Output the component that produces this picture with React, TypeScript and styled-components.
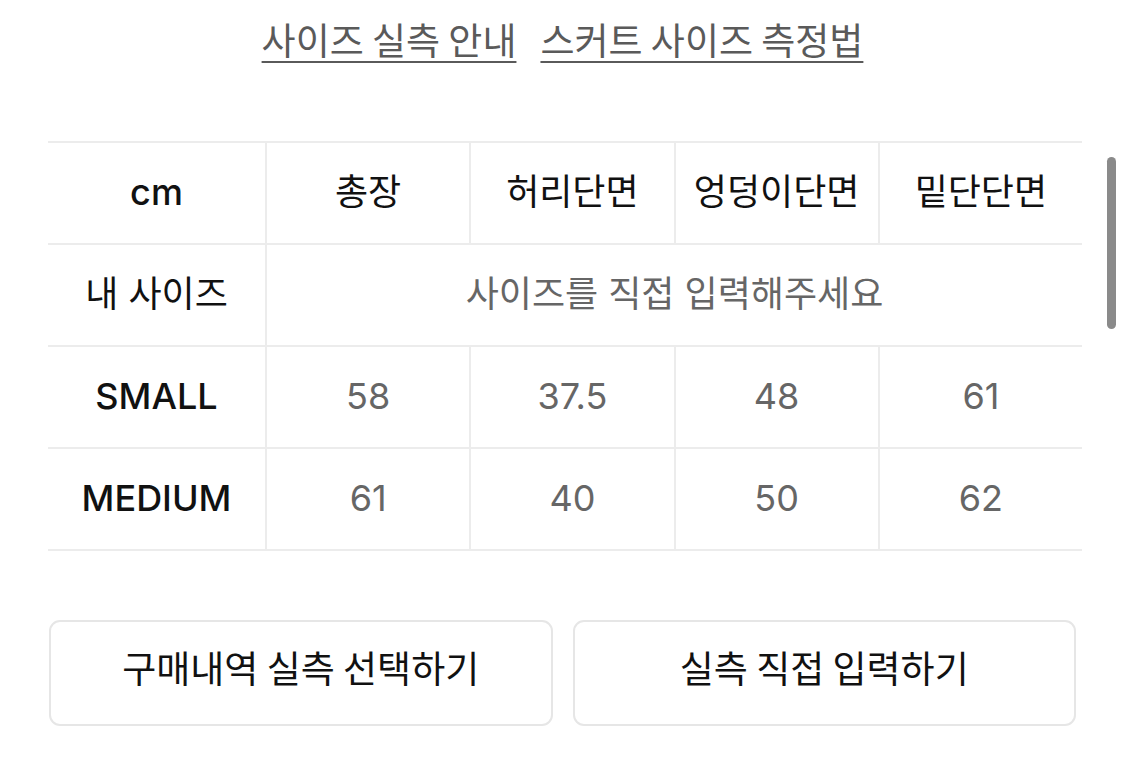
import React from "react";
import styled, { createGlobalStyle } from "styled-components";

const Global = createGlobalStyle`
  html, body { margin: 0; padding: 0; background: #fff; }
  body { font-family: Inter, "Noto Sans CJK KR", sans-serif; }
`;

const Page = styled.div`
  position: relative;
  width: 1125px;
  height: 769px;
  overflow: hidden;
  background: #fff;
`;

const LinkRow = styled.div`
  display: flex;
  justify-content: center;
  gap: 24px;
  padding-top: 13px;
  height: 141px;
  box-sizing: border-box;
`;

const GuideLink = styled.a`
  font-family: "Noto Sans CJK KR", sans-serif;
  font-size: 37px;
  line-height: 52px;
  color: #5a5a5a;
  text-decoration: underline;
  text-decoration-thickness: 2px;
  text-underline-offset: 6px;
  cursor: pointer;
`;

const Table = styled.div`
  display: grid;
  grid-template-columns: 217px repeat(4, 1fr);
  width: 1034px;
  margin-left: 48px;
  border-top: 2px solid #ececec;
`;

const Cell = styled.div<{ $head?: boolean; $span?: number; $first?: boolean; $ko?: boolean }>`
  grid-column: ${(p) => (p.$span ? `span ${p.$span}` : "auto")};
  height: 102px;
  display: flex;
  align-items: center;
  justify-content: center;
  padding-bottom: ${(p) => (p.$ko ? "9px" : "3px")};
  border-bottom: 2px solid #ececec;
  border-left: ${(p) => (p.$first ? "none" : "2px solid #ececec")};
  box-sizing: border-box;
  font-family: Inter, "Noto Sans CJK KR", sans-serif;
  font-size: 36px;
  font-weight: ${(p) => (p.$head && !p.$ko ? 500 : 400)};
  color: ${(p) => (p.$head ? "#111" : "#666")};
`;

const Scrollbar = styled.div`
  position: absolute;
  left: 1107px;
  top: 157px;
  width: 9px;
  height: 172px;
  border-radius: 5px;
  background: #8a8a8a;
`;

const Buttons = styled.div`
  display: grid;
  grid-template-columns: 1fr 1fr;
  gap: 20px;
  width: 1027px;
  margin: 69px 0 0 49px;
`;

const Button = styled.button`
  height: 106px;
  padding: 0 0 12px;
  background: #fff;
  border: 2px solid #e6e6e6;
  border-radius: 11px;
  font-family: "Noto Sans CJK KR", sans-serif;
  font-size: 37px;
  font-weight: 400;
  color: #111;
  cursor: pointer;
`;

const heads = ["총장", "허리단면", "엉덩이단면", "밑단단면"];
const rows = [
  { name: "SMALL", vals: ["58", "37.5", "48", "61"] },
  { name: "MEDIUM", vals: ["61", "40", "50", "62"] },
];

export default function App() {
  return (
    <Page>
      <Global />
      <LinkRow>
        <GuideLink>사이즈 실측 안내</GuideLink>
        <GuideLink>스커트 사이즈 측정법</GuideLink>
      </LinkRow>
      <Table>
        <Cell $head $first>cm</Cell>
        {heads.map((h) => (
          <Cell key={h} $head $ko>{h}</Cell>
        ))}
        <Cell $head $first $ko>내 사이즈</Cell>
        <Cell $span={4} $ko>사이즈를 직접 입력해주세요</Cell>
        {rows.map((r) => (
          <React.Fragment key={r.name}>
            <Cell $head $first>{r.name}</Cell>
            {r.vals.map((v, i) => (
              <Cell key={i}>{v}</Cell>
            ))}
          </React.Fragment>
        ))}
      </Table>
      <Buttons>
        <Button>구매내역 실측 선택하기</Button>
        <Button>실측 직접 입력하기</Button>
      </Buttons>
      <Scrollbar />
    </Page>
  );
}
